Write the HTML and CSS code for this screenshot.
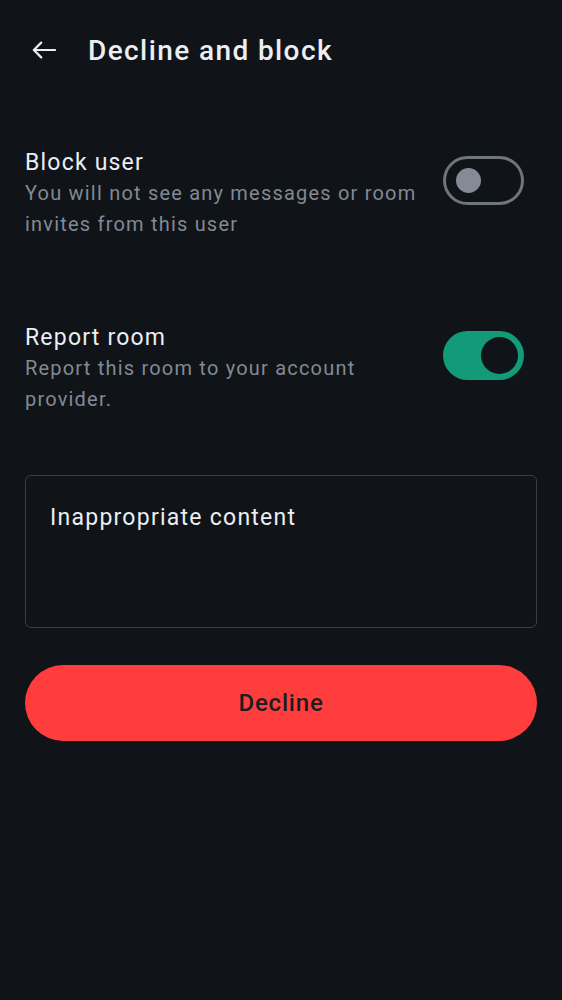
FILE: index.html
```html
<!DOCTYPE html>
<html lang="en">
<head>
<meta charset="utf-8">
<link rel="stylesheet" href="styles.css">
</head>
<body>
<div class="screen">
  <header class="topbar">
    <button class="back" aria-label="Back">
      <svg width="24" height="24" viewBox="0 0 24 24"><path d="M23 12H1.8M9.2 4.6L1.8 12l7.4 7.4" fill="none" stroke="#ebeef2" stroke-width="2.2" stroke-linecap="round" stroke-linejoin="round"/></svg>
    </button>
    <h1 class="title">Decline and block</h1>
  </header>

  <section class="row row-first">
    <div class="row-text">
      <div class="row-title">Block user</div>
      <div class="row-sub">You will not see any messages or room invites from this user</div>
    </div>
    <div class="switch switch-off"><span class="thumb"></span></div>
  </section>

  <section class="row">
    <div class="row-text">
      <div class="row-title">Report room</div>
      <div class="row-sub">Report this room to your account provider.</div>
    </div>
    <div class="switch switch-on"><span class="thumb"></span></div>
  </section>

  <div class="field">Inappropriate content</div>

  <button class="decline">Decline</button>
</div>
</body>
</html>
```

FILE: styles.css
```css
* { box-sizing: border-box; }
html, body { margin: 0; padding: 0; }
body {
  background: #101317;
  font-family: Roboto, "Noto Sans", sans-serif;
  color: #ebeef2;
  width: 562px;
  height: 1000px;
}
.screen { padding: 0 25px; }
.topbar {
  height: 100px;
  display: flex;
  align-items: center;
}
.back {
  background: none;
  border: 0;
  padding: 0;
  margin-left: 7px;
  width: 24px;
  height: 24px;
  display: flex;
}
.title {
  margin: 0 0 0 32px;
  font-size: 28px;
  font-weight: 500;
  letter-spacing: 1.4px;
  color: #ebeef2;
}
.row {
  display: flex;
  justify-content: space-between;
  align-items: flex-start;
  margin-top: 79px;
}
.row-first { margin-top: 44px; }
.row-text { width: 400px; }
.row-title {
  padding-top: 3px;
  font-size: 23px;
  line-height: 32px;
  letter-spacing: 1.2px;
  color: #ebeef2;
}
.row-sub {
  margin-top: -1px;
  font-size: 20px;
  line-height: 31px;
  letter-spacing: 1.2px;
  color: #818a95;
}
.switch {
  width: 81px;
  height: 49px;
  border-radius: 25px;
  margin-top: 12px;
  margin-right: 13px;
  display: flex;
  align-items: center;
  flex-shrink: 0;
}
.switch-off {
  border: 3px solid #6f757d;
  padding-left: 10px;
}
.switch-off .thumb {
  width: 25px; height: 25px; border-radius: 50%;
  background: #858b94;
}
.switch-on {
  background: #139a78;
  justify-content: flex-end;
  padding-right: 6px;
}
.switch-on .thumb {
  width: 37px; height: 37px; border-radius: 50%;
  background: #101317;
}
.field {
  margin-top: 60px;
  height: 153px;
  border: 1.5px solid #3a3e44;
  border-radius: 6px;
  padding: 27px 24px;
  font-size: 23px;
  line-height: 30px;
  letter-spacing: 1.25px;
  color: #ebeef2;
}
.decline {
  display: block;
  width: 100%;
  margin-top: 37px;
  height: 76px;
  border: 0;
  border-radius: 38px;
  background: #ff3d3d;
  color: #1b1d22;
  font-family: Roboto, "Noto Sans", sans-serif;
  font-size: 24px;
  font-weight: 500;
  letter-spacing: 0.8px;
}
```
